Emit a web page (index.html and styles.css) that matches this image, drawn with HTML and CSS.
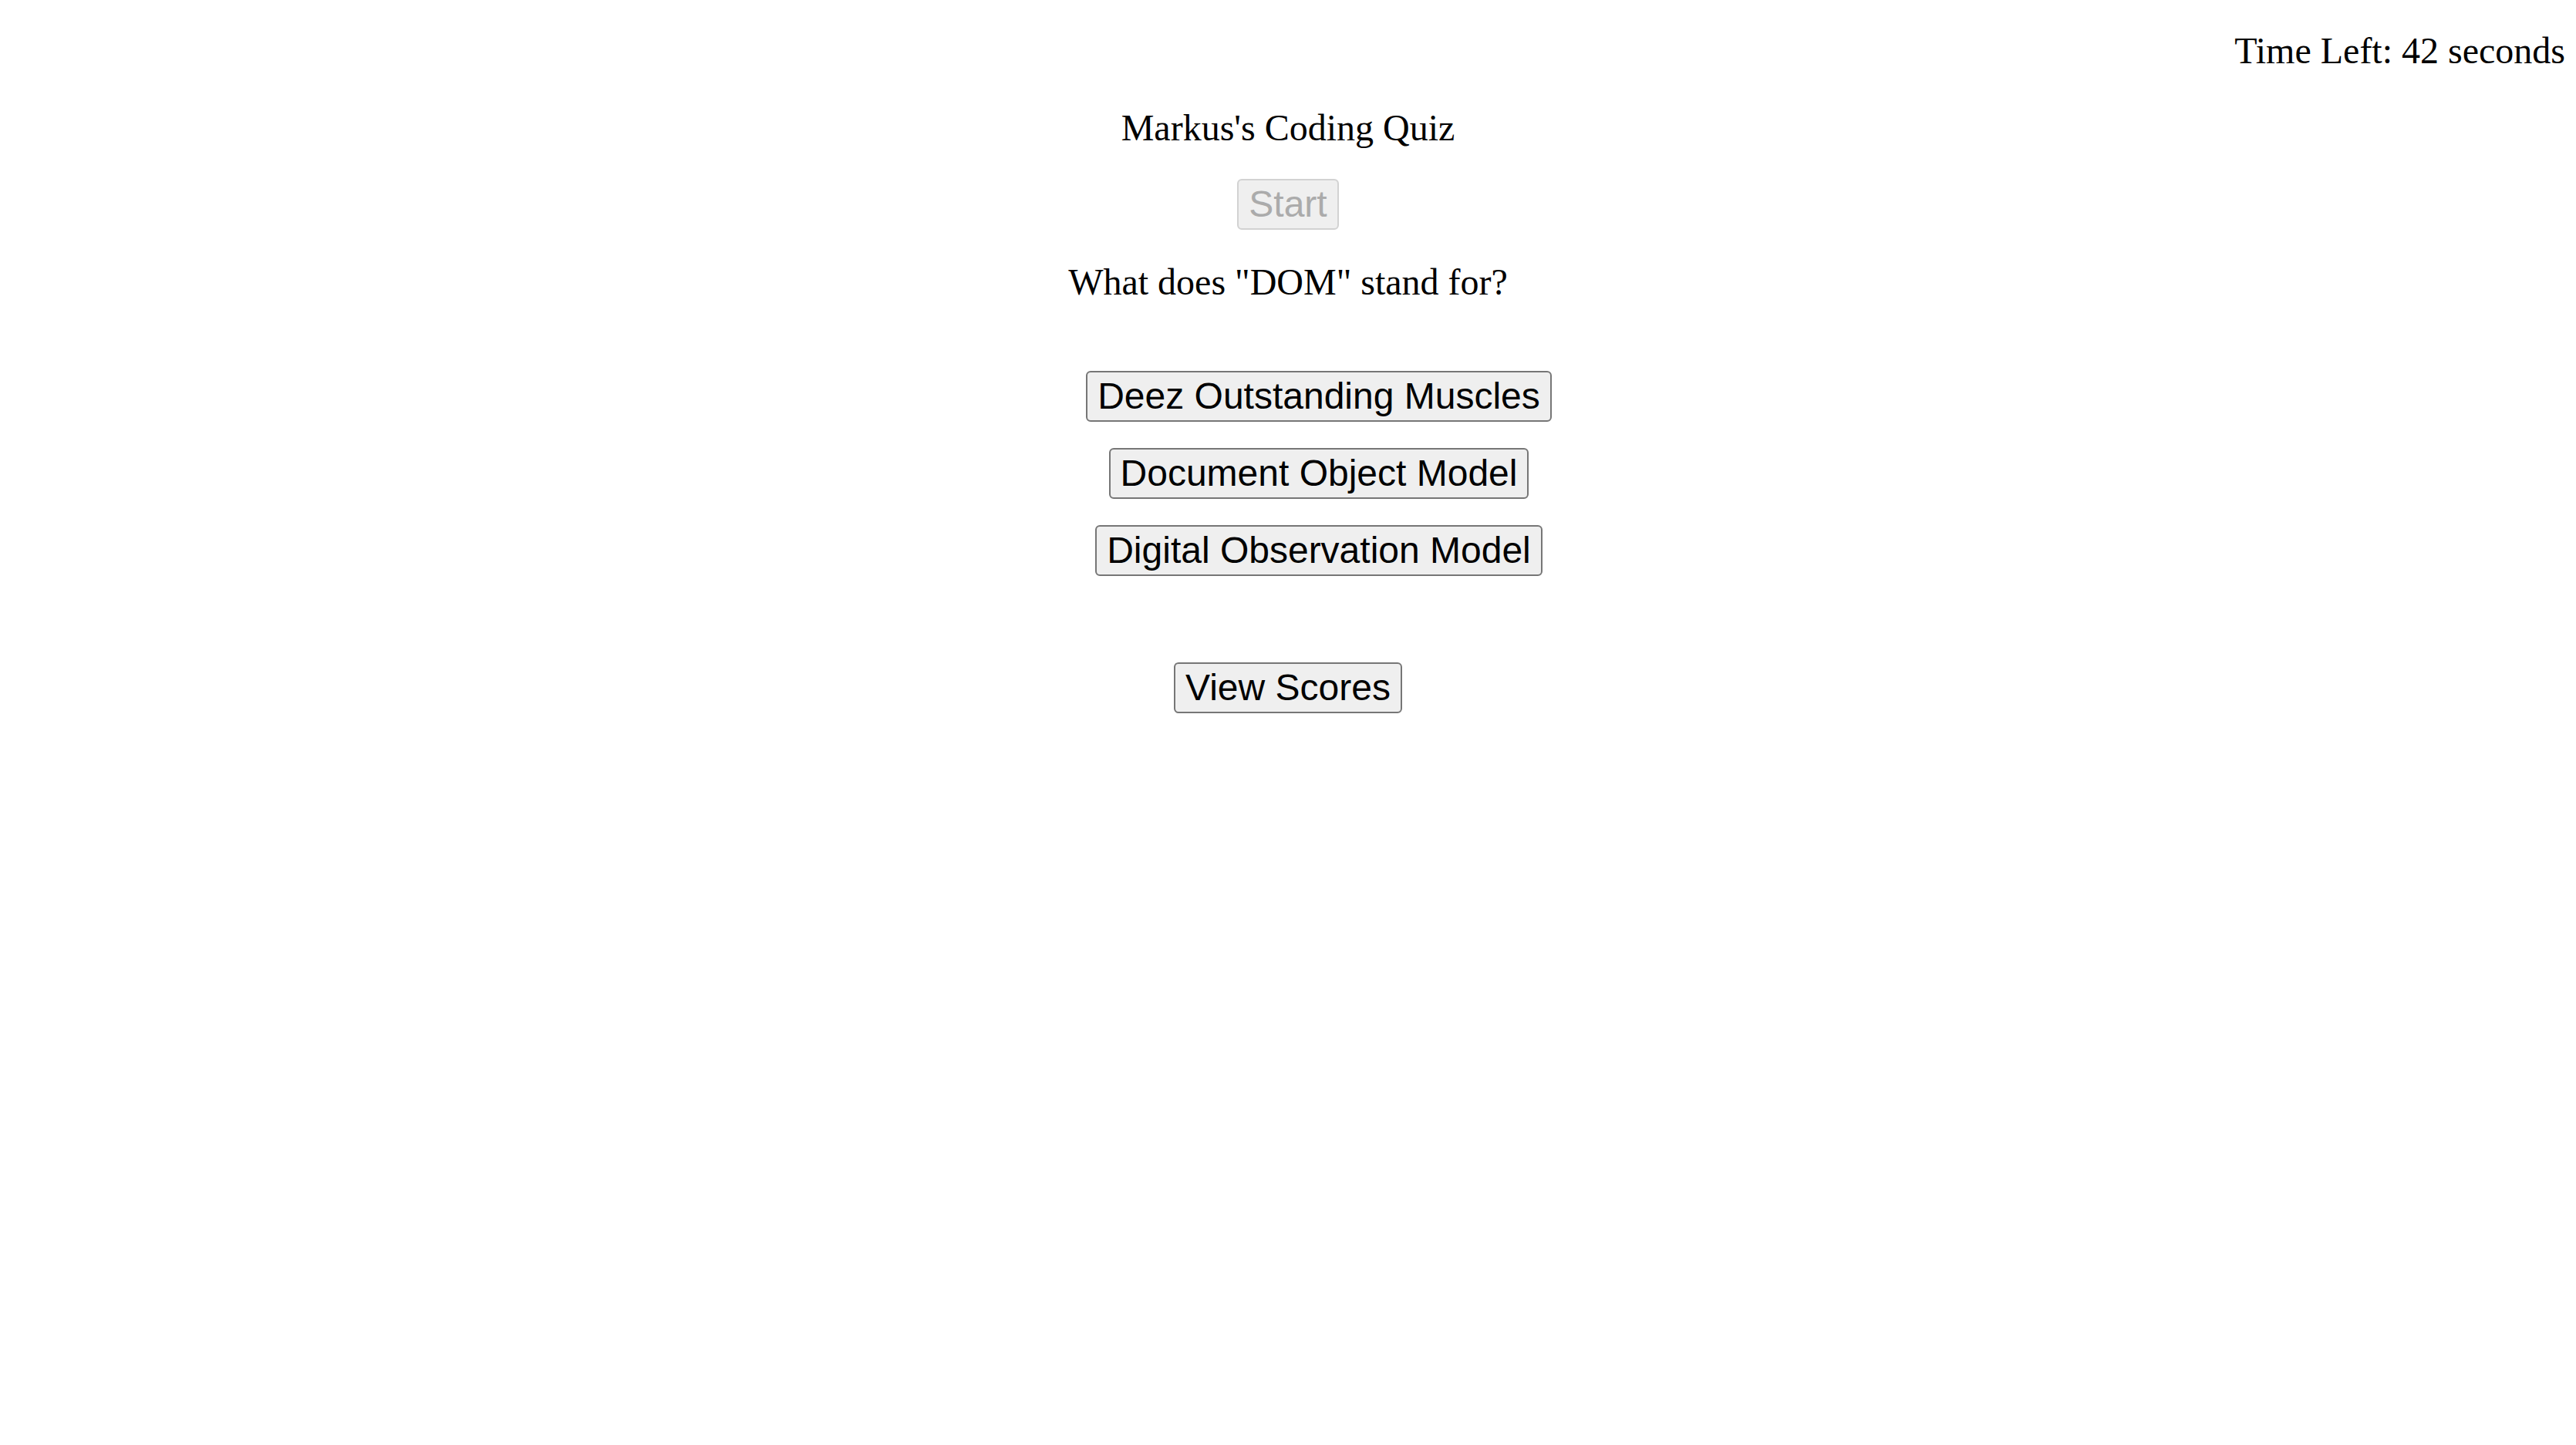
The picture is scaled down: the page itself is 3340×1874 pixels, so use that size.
FILE: index.html
```html
<!DOCTYPE html>
<html lang="en">
<head>
<meta charset="utf-8">
<title>Markus's Coding Quiz</title>
<link rel="stylesheet" href="styles.css">
</head>
<body>
<header class="timer-bar">
  <p class="timer">Time Left: 42 seconds</p>
</header>
<main class="quiz">
  <h1 class="title">Markus's Coding Quiz</h1>
  <button class="btn start" disabled>Start</button>
  <p class="question">What does "DOM" stand for?</p>
  <div class="answers">
    <button class="btn">Deez Outstanding Muscles</button>
    <button class="btn">Document Object Model</button>
    <button class="btn">Digital Observation Model</button>
  </div>
  <button class="btn scores">View Scores</button>
</main>
</body>
</html>
```

FILE: styles.css
```css
html, body {
  margin: 0;
  padding: 0;
  background: #ffffff;
}

body {
  font-family: "Liberation Serif", "Times New Roman", serif;
  font-size: 48px;
  color: #000000;
}

.timer-bar {
  display: flex;
  justify-content: flex-end;
  padding: 38px 14px 0 0;
}

.timer {
  margin: 0;
  line-height: 55px;
}

.quiz {
  display: flex;
  flex-direction: column;
  align-items: center;
}

.title {
  margin: 45px 0 0 0;
  font-size: 48px;
  font-weight: normal;
  line-height: 55px;
}

.question {
  margin: 40px 0 0 0;
  line-height: 55px;
}

.btn {
  font-family: "Liberation Sans", Arial, sans-serif;
  font-size: 48px;
  line-height: 56px;
  color: #000000;
  background: #efefef;
  border: 2px solid #767676;
  border-radius: 6px;
  padding: 3px 13px;
  margin: 0;
}

.start {
  margin-top: 39px;
  color: #ababab;
  background: #efefef;
  border-color: #d2d2d2;
}

.answers {
  display: flex;
  flex-direction: column;
  align-items: center;
  gap: 34px;
  margin-top: 88px;
  padding-left: 80px;
}

.scores {
  margin-top: 112px;
}
```
